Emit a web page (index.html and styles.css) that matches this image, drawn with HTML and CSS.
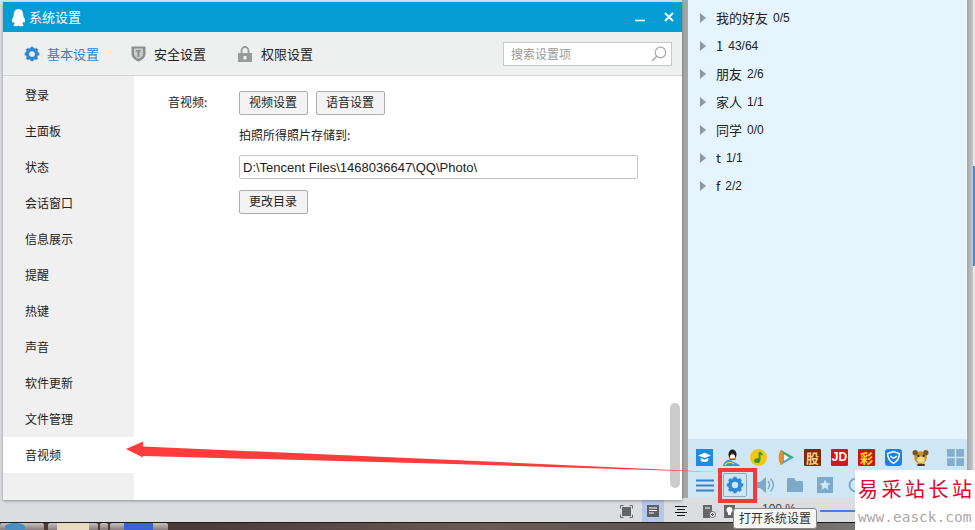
FILE: index.html
```html
<!DOCTYPE html>
<html lang="zh">
<head>
<meta charset="utf-8">
<title>系统设置</title>
<link rel="stylesheet" href="styles.css">
</head>
<body>
<div class="desktop">
  <div class="taskbar">
    <span class="task task-a"><i class="task-globe"></i></span>
    <span class="task task-b"><i class="task-thumb"></i></span>
    <span class="task task-n"></span>
    <span class="task task-c"><i class="task-blue"></i></span>
  </div>

  <div class="statusbar">
    <svg class="st st-1" width="13" height="13" viewBox="0 0 13 13"><path d="M.5 3.500v-3h3M9.500.5h3v3M12.500 9.500v3h-3M3.500 12.500h-3v-3" fill="none" stroke="#666" stroke-width="1"/><rect x="2" y="2" width="9" height="9" fill="#666"/></svg>
    <span class="st-active"><svg width="12" height="12" viewBox="0 0 12 12"><rect width="12" height="12" fill="#5b5f66"/><path d="M2 3h8M2 5.500h8M2 8h5" stroke="#fff" stroke-width="1"/></svg></span>
    <svg class="st st-3" width="12" height="10" viewBox="0 0 12 10"><path d="M0 .5h12M2 3.500h8M0 6.500h12M2 9.500h8" stroke="#111" stroke-width="1"/></svg>
    <svg class="st st-4" width="13" height="13" viewBox="0 0 13 13"><path d="M0 0h9v7H7v6H0z" fill="#666"/><path d="M2 3h5" stroke="#fff"/><circle cx="9.500" cy="9.500" r="3" fill="#fff" stroke="#666"/><path d="M8 9.500h3M9.500 8v3" stroke="#666"/></svg>
    <svg class="st st-5" width="11" height="13" viewBox="0 0 11 13"><rect width="11" height="13" fill="#666"/><circle cx="5.500" cy="5" r="3" fill="#fff"/><rect x="4" y="7" width="3" height="3" fill="#fff"/></svg>
    <span class="zoom-text">100 %</span>
    <span class="zoom-line"></span>
  </div>

  <section class="qq-panel">
    <div class="groups">
      <div class="group"><i class="tri"></i><span class="gname">我的好友</span><span class="gcount">0/5</span></div>
      <div class="group"><i class="tri"></i><span class="gname">1</span><span class="gcount">43/64</span></div>
      <div class="group"><i class="tri"></i><span class="gname">朋友</span><span class="gcount">2/6</span></div>
      <div class="group"><i class="tri"></i><span class="gname">家人</span><span class="gcount">1/1</span></div>
      <div class="group"><i class="tri"></i><span class="gname">同学</span><span class="gcount">0/0</span></div>
      <div class="group"><i class="tri"></i><span class="gname">t</span><span class="gcount">1/1</span></div>
      <div class="group"><i class="tri"></i><span class="gname">f</span><span class="gcount">2/2</span></div>
    </div>
    <div class="tray">
      <div class="apps">
        <svg class="app" viewBox="0 0 16 16"><rect width="16" height="16" fill="#1e8ce0"/><path d="M2 6l6-2.500L14 6 8 8.500z" fill="#fff"/><path d="M4.500 8.500v2.800c2 1.300 5 1.300 7 0V8.500L8 10z" fill="#fff"/></svg>
        <svg class="app" viewBox="0 0 17 17"><ellipse cx="9.500" cy="5.500" rx="4" ry="5" fill="#1c1c1c"/><ellipse cx="9.500" cy="8" rx="2.600" ry="2.800" fill="#fff"/><path d="M7.800 4.800h3.400L9.500 6.300z" fill="#f0a818"/><path d="M5.500 9.500h8L12 11H7z" fill="#d8281c"/><path d="M0 17C1.500 11 6 10 9 12s6 2 8 5z" fill="#3d8fd0"/><path d="M2 16c3-4 6-3 9-1" stroke="#f4d848" stroke-width="1.300" fill="none"/></svg>
        <svg class="app" viewBox="0 0 16 16"><circle cx="8" cy="8" r="8" fill="#f4c613"/><path d="M9 3v7.500" stroke="#2f9a35" stroke-width="1.800"/><ellipse cx="6.800" cy="11" rx="2.800" ry="2.200" fill="#2f9a35"/><path d="M9 2.500c2 .3 3 1.500 3 3.500L9 5z" fill="#2f9a35"/></svg>
        <svg class="app" viewBox="0 0 16 16"><path d="M3.500 1L16 8 3.500 15C2 10 2 6 3.500 1z" fill="#49a8e2"/><path d="M3.500 1C1 5 1 11 3.500 15 5 14 5.500 13 5.500 12V4C5.500 3 5 2 3.500 1z" fill="#f08a20"/><path d="M3.500 1L16 8H10z" fill="#39ad55"/><path d="M6.500 5l5 3-5 3z" fill="#fff"/></svg>
        <span class="app chip chip-gu">股</span>
        <span class="app chip chip-jd">JD</span>
        <span class="app chip chip-cai">彩</span>
        <svg class="app" viewBox="0 0 16 16"><rect width="16" height="16" rx="3" fill="#1f7fe8"/><path d="M8 2.500l5.500 1.800c0 4.500-2 7.300-5.500 9.200C4.500 11.600 2.500 8.800 2.500 4.300z" fill="none" stroke="#fff" stroke-width="1.400"/><path d="M5 6.500c1.800 2.500 4.200 2.500 6 0" fill="none" stroke="#fff" stroke-width="1.400"/></svg>
        <svg class="app" viewBox="0 0 16 16"><ellipse cx="8" cy="8" rx="6" ry="6" fill="#c8942e"/><circle cx="3" cy="3.500" r="2.500" fill="#7a5618"/><circle cx="13" cy="3.500" r="2.500" fill="#7a5618"/><ellipse cx="8.500" cy="10" rx="3.500" ry="3" fill="#f4dc8c"/><circle cx="6" cy="6.500" r="1" fill="#222"/><circle cx="11" cy="6.500" r="1" fill="#222"/><path d="M5 14h7v2H5z" fill="#4a3a18"/></svg>
        <svg class="app app-grid" viewBox="0 0 16 16" fill="#83aece"><rect width="7.300" height="7.300"/><rect x="8.700" width="7.300" height="7.300"/><rect y="8.700" width="7.300" height="7.300"/><rect x="8.700" y="8.700" width="7.300" height="7.300"/></svg>
      </div>
      <div class="tools">
        <svg class="tool-menu" width="18" height="13" viewBox="0 0 18 13"><path d="M0 1.500h18M0 6.500h18M0 11.500h18" stroke="#3d7fc0" stroke-width="2.200"/></svg>
        <span class="tool-gear">
          <svg width="18" height="18" viewBox="0 0 24 24"><circle cx="12" cy="12" r="6.800" fill="none" stroke="#2f88d8" stroke-width="5"/><path d="M12 1v4M12 19v4M1 12h4M19 12h4M4.200 4.200L7 7M17 17l2.800 2.800M19.800 4.200L17 7M7 17l-2.800 2.800" stroke="#2f88d8" stroke-width="4.200"/></svg>
        </span>
        <svg class="tool tool-spk" width="17" height="18" viewBox="0 0 17 18"><path d="M0 6h3l6-5v16l-6-5H0z" fill="#7ea9c9"/><path d="M11 5c2 2.500 2 5.500 0 8M13.500 2.500c3.500 4 3.500 9 0 13" stroke="#7ea9c9" stroke-width="1.400" fill="none"/></svg>
        <svg class="tool tool-fld" width="16" height="14" viewBox="0 0 16 14"><path d="M0 0h7l2 3h7v11H0z" fill="#7ea9c9"/></svg>
        <svg class="tool tool-star" width="16" height="16" viewBox="0 0 16 16"><rect width="16" height="16" fill="#7ea9c9"/><path d="M8 2.500l1.600 3.600 3.900.4-2.900 2.500.9 3.900L8 10.800 4.500 12.900l.9-3.900L2.500 6.500l3.900-.4z" fill="#cfe6f5"/></svg>
        <svg class="tool" width="16" height="16" viewBox="0 0 16 16"><circle cx="8" cy="8" r="6.500" fill="none" stroke="#7ea9c9" stroke-width="2"/></svg>
      </div>
    </div>
  </section>
  <div class="scroll-strip"><i class="strip-grad"></i><i class="strip-edge"><b></b></i></div>

  <section class="window">
    <header class="titlebar">
      <svg class="qq-logo" width="15" height="19" viewBox="0 0 15 19"><path fill="#fff" d="M7.500 1C10.800 1 12.300 3.800 12.300 7c0 1 .1 1.500.7 2.500.8 1.400 1.300 3 .9 4.500-.3 1-1 .5-1.500-.3-.2 1-.7 1.800-1.300 2.300.9.400 1.600.9 1.500 1.500-.1.500-1.800.7-3.100.7-1 0-1.700-.3-2-.6-.3.300-1 .6-2 .6-1.300 0-3-.2-3.100-.7-.1-.6.600-1.100 1.500-1.500-.6-.5-1.100-1.300-1.300-2.300-.5.800-1.200 1.300-1.500.3-.4-1.500.1-3.100.9-4.500.6-1 .7-1.500.7-2.500C2.700 3.800 4.200 1 7.500 1z"/></svg>
      <span class="title">系统设置</span>
      <span class="win-btns">
        <svg width="10" height="10" viewBox="0 0 10 10"><path d="M0 8.500h10" stroke="#fff" stroke-width="1.500"/></svg>
        <svg width="10" height="10" viewBox="0 0 10 10"><path d="M1 1l8 8M9 1l-8 8" stroke="#fff" stroke-width="1.800"/></svg>
      </span>
    </header>
    <nav class="tabs">
      <span class="tab tab-active">
        <svg width="16" height="16" viewBox="0 0 24 24"><circle cx="12" cy="12" r="6.800" fill="none" stroke="#2f88d8" stroke-width="5"/><path d="M12 1v4M12 19v4M1 12h4M19 12h4M4.200 4.200L7 7M17 17l2.800 2.800M19.800 4.200L17 7M7 17l-2.800 2.800" stroke="#2f88d8" stroke-width="4.200"/></svg>
        基本设置
      </span>
      <span class="tab tab-safe">
        <svg width="15" height="17" viewBox="0 0 15 17"><path d="M.5 1.500h14V9c0 3.500-3.500 6-7 7.500C4 15 .5 12.500.5 9z" fill="#8e8e8e"/><path d="M3 3.500h9V9c0 2.300-2.300 4-4.500 5C5.300 13 3 11.300 3 9z" fill="#c9cdcc"/><path d="M4.500 5h6L8.500 7.500V12h-2V7.500z" fill="#8e8e8e"/></svg>
        安全设置
      </span>
      <span class="tab tab-perm">
        <svg width="14" height="16" viewBox="0 0 14 16"><rect y="7" width="14" height="9" fill="#9a9a9a"/><path d="M3.500 7V4.500a3.500 3.500 0 0 1 7 0V7" fill="none" stroke="#9a9a9a" stroke-width="1.800"/><rect x="5.500" y="10" width="3" height="3.500" fill="#eeefef"/></svg>
        权限设置
      </span>
      <span class="search">
        <span class="search-text">搜索设置项</span>
        <svg width="16" height="16" viewBox="0 0 16 16"><circle cx="9.500" cy="6.500" r="5.300" fill="none" stroke="#aaa" stroke-width="1.200"/><path d="M5.500 10.500L1 15" stroke="#aaa" stroke-width="1.400"/></svg>
      </span>
    </nav>
    <div class="body">
      <aside class="side">
        <div class="side-item">登录</div>
        <div class="side-item">主面板</div>
        <div class="side-item">状态</div>
        <div class="side-item">会话窗口</div>
        <div class="side-item">信息展示</div>
        <div class="side-item">提醒</div>
        <div class="side-item">热键</div>
        <div class="side-item">声音</div>
        <div class="side-item">软件更新</div>
        <div class="side-item">文件管理</div>
        <div class="side-item side-active">音视频</div>
      </aside>
      <main class="content">
        <div class="row-av">
          <span class="label">音视频:</span>
          <div class="av-fields">
            <div class="btn-row">
              <span class="btn">视频设置</span>
              <span class="btn">语音设置</span>
            </div>
            <div class="hint">拍照所得照片存储到:</div>
            <div class="path">D:\Tencent Files\1468036647\QQ\Photo\</div>
            <div class="btn-row"><span class="btn">更改目录</span></div>
          </div>
        </div>
        <i class="thumb"></i>
      </main>
    </div>
  </section>

  <svg class="arrow" width="600" height="60" viewBox="0 0 600 60">
    <path d="M0 19L17 11.500 17 16.500 327 30 590 42 327 34 17 26 17 27.500z" fill="#ff3c3c"/>
  </svg>
  <div class="redbox"></div>
  <div class="tooltip">打开系统设置</div>
  <div class="watermark">
    <div class="wm-cn">易采站长站</div>
    <div class="wm-en">www.easck.com</div>
  </div>
</div>
</body>
</html>
```
FILE: styles.css
```css
* { box-sizing: border-box; }
html, body { margin: 0; padding: 0; }
body { font-family: "Noto Sans CJK SC", "Liberation Sans", sans-serif; color: #222; }
.desktop { position: relative; width: 975px; height: 530px; overflow: hidden; background: #dcdde0; }

.taskbar { position: absolute; left: 0; right: 0; top: 522px; height: 8px; display: flex; background: linear-gradient(90deg, #4a3a38 20%, #6b5a55 50%, #5c5450 70%, #8a8f90); border-top: 1px solid #1c1c1c; }
.task { height: 7px; background: linear-gradient(#c8c0c0, #8a7c7c); border-radius: 2px 2px 0 0; display: flex; }
.task-a { width: 44px; margin-right: 4px; }
.task-b { width: 50px; margin-right: 2px; }
.task-n { width: 8px; margin-right: 2px; }
.task-c { width: 58px; }
.task i { display: block; height: 7px; }
.task-globe { background: #4b8fc0; width: 20px; margin-left: 5px; border-radius: 50% 50% 0 0; }
.task-thumb { background: #e8dcc0; width: 32px; margin-left: 9px; }
.task-blue { background: #3b62d8; width: 29px; margin-left: 14px; }

.statusbar { position: absolute; left: 620px; top: 500px; height: 22px; display: flex; align-items: center; }
.st { display: block; flex: none; }
.st-1 { margin-right: 9px; }
.st-active { width: 22px; height: 22px; background: #b6c8e6; display: flex; align-items: center; justify-content: center; margin-right: 11px; }
.st-3 { margin-right: 16px; }
.st-4 { margin-right: 8px; }
.st-5 { margin-right: 27px; }
.zoom-text { font: 12px "Liberation Sans", sans-serif; color: #444; position: relative; top: -2px; }
.zoom-line { width: 60px; height: 2px; background: #4a7fd8; margin-left: 24px; }

.qq-panel { position: absolute; left: 682px; top: 0; width: 285px; height: 498px; background: #e5f4fd; border-left: 6px solid; border-image: linear-gradient(90deg, #a6a6a6, #c6c6c6) 1; display: flex; flex-direction: column; }
.groups { flex: 1; padding-top: 4px; }
.group { height: 28px; display: flex; align-items: center; font-size: 13px; color: #222; padding-left: 12px; }
.tri { width: 0; height: 0; border-left: 6px solid #8a9aa0; border-top: 5px solid transparent; border-bottom: 5px solid transparent; margin-right: 10px; flex: none; }
.gname { margin: -2px 5px 0 0; }
.gcount { font: 12px "Liberation Sans", sans-serif; }
.tray { height: 59px; background: #cfe6f5; padding-top: 3px; }
.apps { height: 30px; display: flex; align-items: center; padding-left: 8px; gap: 10px; }
.app { flex: none; display: block; width: 17px; height: 17px; }
.chip { font-size: 13px; font-weight: 700; line-height: 17px; text-align: center; color: #fff; overflow: hidden; border-radius: 1px; }
.chip-gu { background: #7a2a0a; color: #f6d08c; }
.chip-jd { background: #d8141c; font-family: "Liberation Sans", sans-serif; font-size: 12px; }
.chip-cai { background: #cc1414; color: #ffe020; }
.app-grid { margin-left: 8px; }
.tools { height: 26px; display: flex; align-items: center; padding-left: 8px; }
.tool-menu { flex: none; margin-right: 9px; }
.tool-gear { width: 24px; height: 24px; border: 1px solid #8fa8bc; border-radius: 2px; display: flex; align-items: center; justify-content: center; margin-right: 10px; flex: none; }
.tool { flex: none; }
.tool-spk { margin-right: 13px; }
.tool-fld { margin-right: 14px; }
.tool-star { margin-right: 15px; }

.scroll-strip { position: absolute; left: 967px; top: 0; width: 8px; height: 498px; display: flex; }
.strip-grad { width: 6px; background: linear-gradient(90deg, #a6a6a6, #c6c6c6); }
.strip-edge { width: 2px; background: #e8e8e8; }
.strip-edge b { display: block; margin-top: 166px; height: 100px; background: #4a86e8; }

.window { position: absolute; left: 3px; top: 2px; width: 679px; height: 498px; background: #fff; display: flex; flex-direction: column; box-shadow: 0 1px 3px rgba(0,0,0,.35); }
.titlebar { height: 30px; flex: none; background: #069dd5; display: flex; align-items: center; padding: 0 8px; color: #fff; line-height: 1; }
.qq-logo { flex: none; margin-right: 3px; }
.title { font-size: 13px; position: relative; top: -1px; }
.win-btns { margin-left: auto; display: flex; gap: 19px; }
.win-btns svg { display: block; }
.tabs { height: 44px; flex: none; background: #eeefef; border-bottom: 1px solid #d4d4d4; display: flex; align-items: center; padding-left: 21px; font-size: 13px; color: #222; line-height: 1; }
.tab { display: flex; align-items: center; gap: 7px; }
.tab-active { color: #2f7fd0; width: 107px; }
.tab-safe { width: 107px; gap: 8px; }
.tab-perm { width: 266px; gap: 9px; }
.search { width: 169px; height: 24px; background: #fff; border: 1px solid #c8c8c8; display: flex; align-items: center; justify-content: space-between; padding: 0 4px 0 7px; margin-left: -1px; }
.search-text { font-size: 12px; color: #999; }
.body { flex: 1; display: flex; min-height: 0; }
.side { width: 131px; flex: none; background: #f0f0f0; padding-top: 1px; }
.side-item { height: 36px; display: flex; align-items: center; padding-left: 22px; font-size: 12px; color: #222; line-height: 1; }
.side-active { background: #fff; }
.content { flex: 1; position: relative; background: #fff; padding: 15px 0 0 34px; }
.row-av { display: flex; }
.label { width: 71px; font-size: 12px; height: 23px; line-height: 22px; }
.av-fields { display: flex; flex-direction: column; }
.btn-row { display: flex; gap: 8px; }
.btn { height: 24px; padding: 0 9px; background: #f3f3f3; border: 1px solid #adadad; border-radius: 2px; font-size: 12px; line-height: 20px; color: #222; width: 69px; white-space: nowrap; }
.hint { font-size: 12px; margin-top: 10px; line-height: 20px; }
.path { width: 399px; height: 24px; margin: 10px 0 11px; border: 1px solid #c4c4c4; border-radius: 2px; font: 13px/23px "Liberation Sans", sans-serif; padding-left: 3px; color: #222; }
.thumb { position: absolute; right: 2px; top: 327px; width: 10px; height: 85px; border-radius: 5px; background: #cccccc; }

.arrow { position: absolute; left: 126px; top: 430px; }
.redbox { position: absolute; left: 718px; top: 468px; width: 39px; height: 35px; border: 4px solid #f23a3a; }
.tooltip { position: absolute; left: 733px; top: 508px; width: 84px; height: 21px; background: #f7f7f5; border: 1px solid #8a8a8a; border-radius: 3px; font-size: 12px; line-height: 18px; text-align: center; color: #333; }
.watermark { position: absolute; left: 855px; top: 470px; width: 120px; height: 60px; background: #fff; padding-left: 3px; }
.wm-cn { font: 400 20px/38px "Noto Sans CJK SC", sans-serif; color: #e8002d; letter-spacing: 3.500px; white-space: nowrap; }
.wm-en { font: 14.500px/18px "DejaVu Sans Mono", monospace; color: #b0a8a8; white-space: nowrap; letter-spacing: 0; }
```
